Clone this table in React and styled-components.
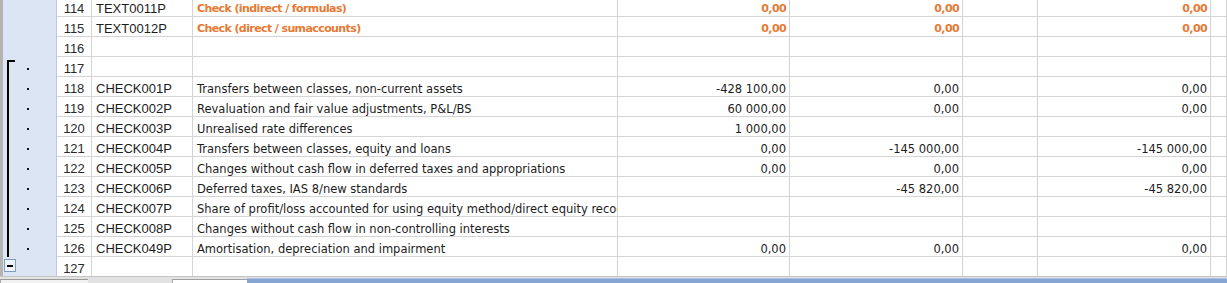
import styled, { createGlobalStyle } from "styled-components";

const GlobalStyle = createGlobalStyle`
  html, body {
    margin: 0;
    padding: 0;
    background: #ffffff;
    overflow: hidden;
  }
`;

const COLS = "57px 35px 101px 425px 172px 173px 75px 173px 1fr";
const GRID = "#d4d4d4";

//STYLING
const Page = styled.div`
  width: 1227px;
  height: 283px;
  display: flex;
  flex-direction: column;
  overflow: hidden;
`;

const Sheet = styled.div`
  height: 276px;
  overflow: hidden;
`;

const Rows = styled.div`
  margin-top: -3px;
  display: flex;
  flex-direction: column;
`;

const Row = styled.div`
  display: grid;
  grid-template-columns: ${COLS};
  height: 20px;
`;

const Gutter = styled.div`
  box-sizing: border-box;
  background: #dbe5f3;
  border-left: 3px solid #b4b4b4;
  border-right: 1px solid #b9c9de;
  padding-left: 1px;
  display: flex;
  align-items: center;
`;

const Bracket = styled.div`
  box-sizing: border-box;
  width: 8px;
  margin-left: 3px;
  align-self: ${(p) => (p.$kind === "top" ? "flex-end" : "stretch")};
  height: ${(p) => (p.$kind === "top" ? "17px" : "auto")};
  border-left: ${(p) => (p.$kind ? "2px solid #000" : "none")};
  border-top: ${(p) => (p.$kind === "top" ? "2px solid #000" : "none")};
`;

const Dot = styled.div`
  width: 2px;
  height: 2px;
  background: #111;
  margin-left: 12px;
  margin-top: 4px;
`;

const Collapse = styled.div`
  box-sizing: border-box;
  width: 12px;
  height: 13px;
  align-self: flex-start;
  margin-top: 2px;
  border: 1px solid #7f9cc4;
  background: #eef3fa;
  display: flex;
  align-items: center;
  justify-content: center;
  &::after {
    content: "";
    width: 6px;
    height: 2px;
    background: #000;
  }
`;

const RowNum = styled.div`
  box-sizing: border-box;
  background: #ffffff;
  border-right: 1px solid ${GRID};
  border-bottom: 1px solid ${GRID};
  display: flex;
  align-items: center;
  justify-content: center;
  padding-top: 4px;
  font-family: "Liberation Sans", Arial, sans-serif;
  font-size: 13px;
  color: #2a2a2a;
`;

const Cell = styled.div`
  box-sizing: border-box;
  border-right: 1px solid ${GRID};
  border-bottom: 1px solid ${GRID};
  display: flex;
  align-items: center;
  justify-content: ${(p) => (p.$num ? "flex-end" : "flex-start")};
  padding: 4px ${(p) => (p.$num ? "3px" : "0")} 0 ${(p) => (p.$num ? "0" : "4px")};
  overflow: hidden;
  white-space: nowrap;
  font-family: ${(p) =>
    p.$code ? '"Liberation Sans", Arial, sans-serif' : '"DejaVu Sans", Verdana, sans-serif'};
  font-size: ${(p) => (p.$code ? "13px" : p.$warn ? "11px" : "11.5px")};
  font-weight: ${(p) => (p.$warn ? 700 : 400)};
  letter-spacing: ${(p) => (p.$warn ? "-0.6px" : "0")};
  color: ${(p) => (p.$warn ? "#e67a34" : "#1c1c1c")};
`;

const TabBar = styled.div`
  flex: 1;
  display: flex;
  background: #e2e2e2;
  border-top: 1px solid #c4c4c4;
`;

const Tab = styled.div`
  width: ${(p) => p.$w}px;
  margin-top: 2px;
  box-sizing: border-box;
  border-top: 1px solid ${(p) => (p.$active ? "#a0a0a0" : "#9a9a9a")};
  border-left: 1px solid #a8a8a8;
  background: ${(p) => (p.$active ? "#ffffff" : "#f2f2f2")};
`;

const TabGap = styled.div`
  width: ${(p) => p.$w}px;
`;

const ScrollTrack = styled.div`
  flex: 1;
  margin-top: 1px;
  background: #86a5d3;
  border-top: 1px solid #a9c0e2;
`;

//DATA
const rows = [
  { n: 114, code: "TEXT0011P", text: "Check (indirect / formulas)", vals: ["0,00", "0,00", "", "0,00"], warn: true },
  { n: 115, code: "TEXT0012P", text: "Check (direct / sumaccounts)", vals: ["0,00", "0,00", "", "0,00"], warn: true },
  { n: 116 },
  { n: 117, bracket: "top", dot: true },
  { n: 118, code: "CHECK001P", text: "Transfers between classes, non-current assets", vals: ["-428 100,00", "0,00", "", "0,00"], bracket: "mid", dot: true },
  { n: 119, code: "CHECK002P", text: "Revaluation and fair value adjustments, P&L/BS", vals: ["60 000,00", "0,00", "", "0,00"], bracket: "mid", dot: true },
  { n: 120, code: "CHECK003P", text: "Unrealised rate differences", vals: ["1 000,00", "", "", ""], bracket: "mid", dot: true },
  { n: 121, code: "CHECK004P", text: "Transfers between classes, equity and loans", vals: ["0,00", "-145 000,00", "", "-145 000,00"], bracket: "mid", dot: true },
  { n: 122, code: "CHECK005P", text: "Changes without cash flow in deferred taxes and appropriations", vals: ["0,00", "0,00", "", "0,00"], bracket: "mid", dot: true },
  { n: 123, code: "CHECK006P", text: "Deferred taxes, IAS 8/new standards", vals: ["", "-45 820,00", "", "-45 820,00"], bracket: "mid", dot: true },
  { n: 124, code: "CHECK007P", text: "Share of profit/loss accounted for using equity method/direct equity recognition", vals: ["", "", "", ""], bracket: "mid", dot: true },
  { n: 125, code: "CHECK008P", text: "Changes without cash flow in non-controlling interests", vals: ["", "", "", ""], bracket: "mid", dot: true },
  { n: 126, code: "CHECK049P", text: "Amortisation, depreciation and impairment", vals: ["0,00", "0,00", "", "0,00"], bracket: "mid", dot: true },
  { n: 127, collapse: true },
];

const App = () => {
  return (
    <Page>
      <GlobalStyle />
      <Sheet>
        <Rows>
          {rows.map((r) => {
            const vals = r.vals || ["", "", "", ""];
            return (
              <Row key={r.n}>
                <Gutter>
                  {r.collapse ? (
                    <Collapse />
                  ) : (
                    <>
                      <Bracket $kind={r.bracket} />
                      {r.dot && <Dot />}
                    </>
                  )}
                </Gutter>
                <RowNum>{r.n}</RowNum>
                <Cell $code>{r.code}</Cell>
                <Cell $warn={r.warn}>{r.text}</Cell>
                {vals.map((v, i) => (
                  <Cell key={i} $num $warn={r.warn}>
                    {v}
                  </Cell>
                ))}
                <Cell />
              </Row>
            );
          })}
        </Rows>
      </Sheet>
      {/* sheet tabs and horizontal scroll bar */}
      <TabBar>
        <Tab $w={88} />
        <TabGap $w={84} />
        <Tab $w={75} $active />
        <ScrollTrack />
      </TabBar>
    </Page>
  );
};

export default App;
